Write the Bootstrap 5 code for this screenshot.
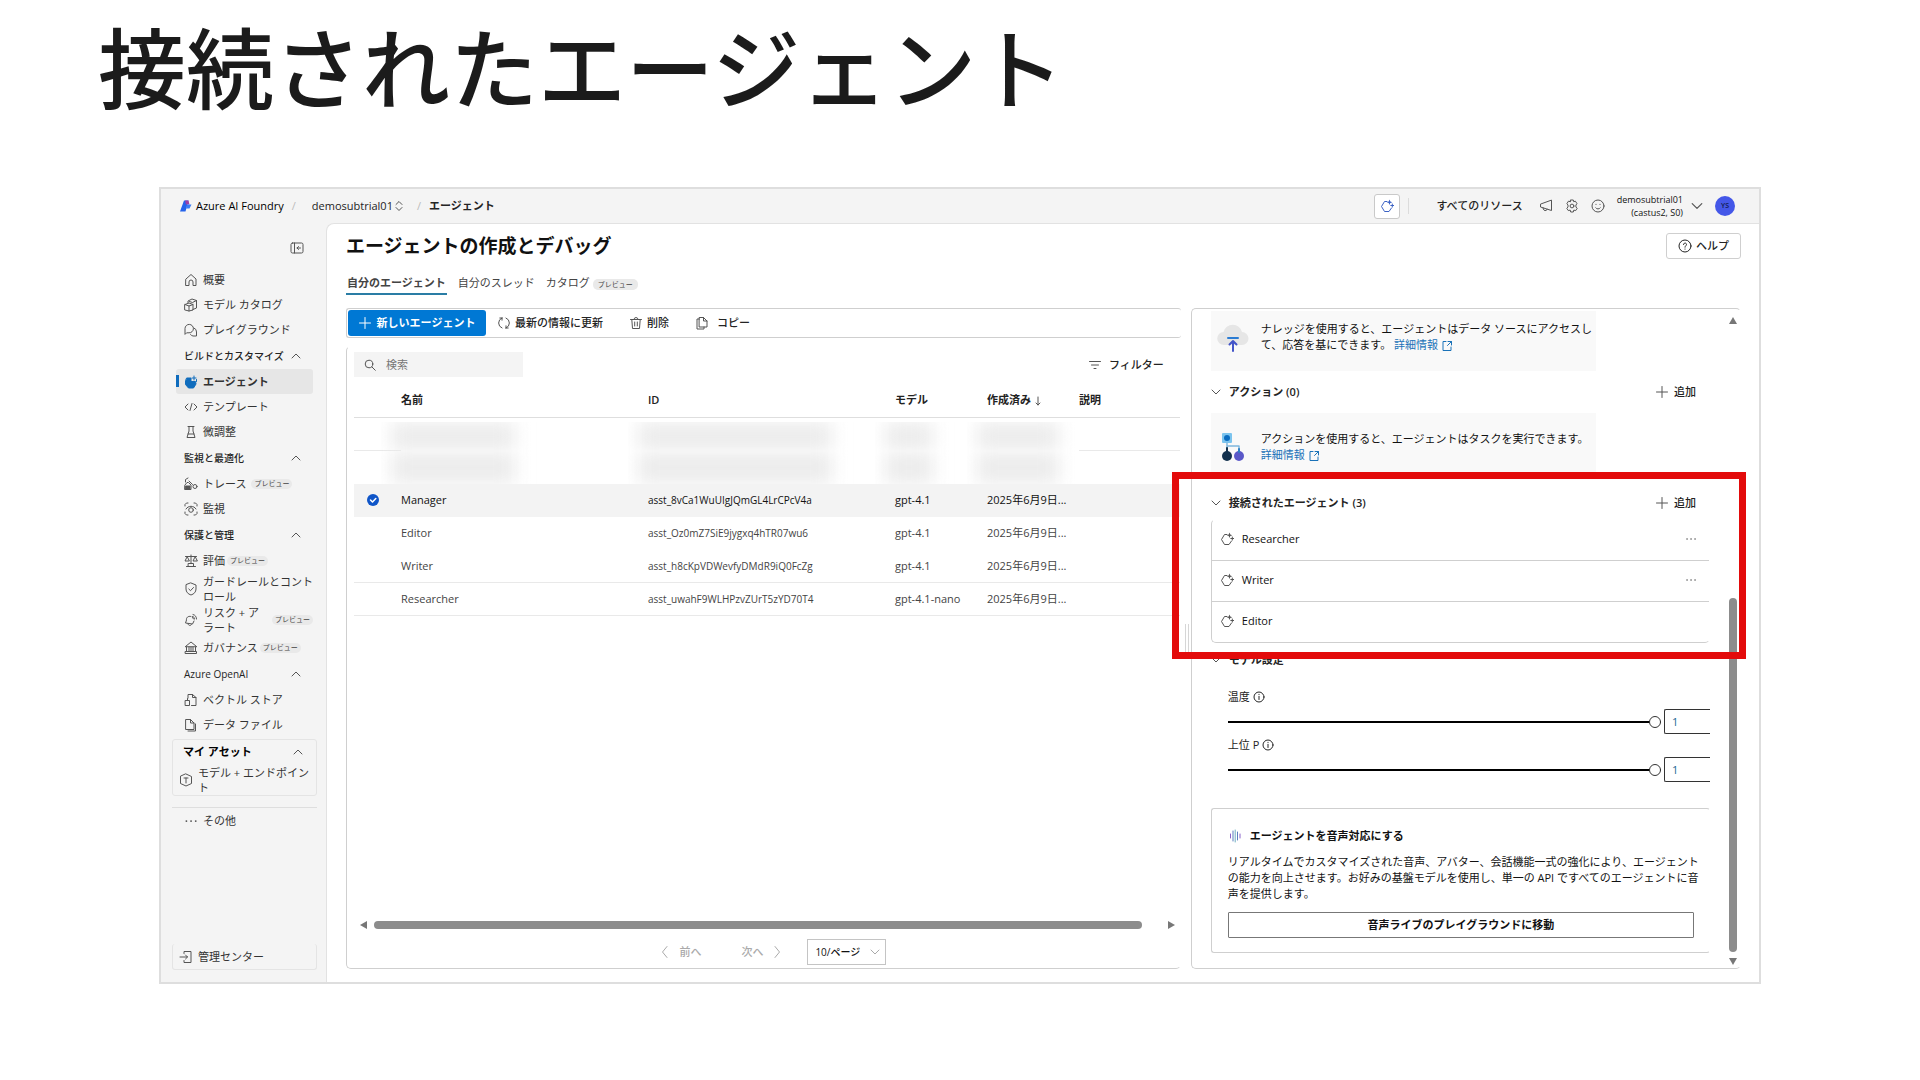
<!DOCTYPE html>
<html lang="ja">
<head>
<meta charset="utf-8">
<meta name="viewport" content="width=device-width, initial-scale=1">
<title>接続されたエージェント</title>
<link href="https://cdn.jsdelivr.net/npm/bootstrap@5.3.0/dist/css/bootstrap.min.css" rel="stylesheet">
<style>
:root{--line:#cfcfcf;--ink:#242424;--blue:#0078d4}
body{font-family:"Open Sans","Noto Sans CJK JP",sans-serif;font-size:11px;line-height:16px;color:var(--ink);background:#fff}
svg{flex:none;fill:none;stroke:currentColor;stroke-width:1;stroke-linecap:round;stroke-linejoin:round}
svg.art{stroke:none}
.side svg,.topbar svg,.sec svg,.secm svg,.agentlist svg,.tools svg,.listbox svg{color:#555}
.tools .primary svg{color:#fff}
button,input,select{font:inherit;color:inherit}
a{color:inherit;text-decoration:none}
.i14{width:14px;height:14px}.i12{width:12px;height:12px}.i10{width:10px;height:10px}
.slide-title{font-family:"Noto Sans CJK JP",sans-serif;font-size:88px;line-height:88px;font-weight:500;color:#1b1b1b;padding:20px 98px 79px}
.stage{padding:0 159px}
.frame{border:2px solid #dedede;background:#f4f4f4}
.topbar{height:34px;padding:0 24px 0 19px}
.slash{color:#bbb}
.copilot{width:26px;height:25px;border:1px solid #c9c9c9;background:#fff;border-radius:3px}
.topbar .copilot svg{color:#3c62c4}
.topbar .divider{width:1px;height:16px;background:#dcdcdc;margin:0 27px 0 8px}
.small-id{font-size:9px;line-height:13px;color:#111}
.avatar{width:20px;height:20px;border-radius:50%;background:#4457e8;color:#111c50;font-size:7px;font-weight:600}
.side{flex:none;width:165px;padding:0 9px 12px 11px;white-space:nowrap}
.toggle-row{height:44px;padding:6px 13px 0 0}
.side a{min-height:25px;padding:0 4px 0 12px;gap:5px;line-height:15px;color:#333}
.side a.two{min-height:31px}
.side a.active{background:#e6e6e6;border-radius:3px;font-weight:600;position:relative;margin:0 4px;padding-left:8px}
.side a.active::before{content:"";position:absolute;left:0;top:6px;width:3px;height:12px;background:#0f6cbd}
.side .active svg{color:#0f6cbd}
.side .grp{height:27px;padding:0 16px 0 12px;font-size:10px;font-weight:500;border:0;background:none;width:100%}
.pill{font-size:7px;line-height:10px;padding:0 3px;margin-left:-3px;border-radius:5px;background:#e9e9e9;white-space:nowrap;color:#444}
.tabs .pill{padding:1px 5px}
.boxed{border:1px solid #e4e4e4;border-radius:3px}
.boxed .grp{height:24px;padding:0 13px 0 10px;font-size:11px;font-weight:700;color:#000}
.boxed a{padding:0 0 0 6px}
.assets{margin-top:2px}
.other{border-top:1px solid #dedede;margin-top:11px}
.main{min-width:0;background:#fff;border:1px solid #e2e2e2;border-width:1px 0 0 1px;border-radius:8px 0 0 0;padding:9px 18px 13px 19px}
.page-h{font-size:19px;line-height:26px;font-weight:700;color:#111}
.help{width:75px;height:26px;border:1px solid #cfcfcf;background:#fff;border-radius:3px;gap:4px;font-weight:500}
.tabs{padding-top:12px;gap:11px;height:37px}
.tabs a{height:24px;line-height:24px;color:#444}
.tabs a.on{font-weight:600;border-bottom:2px solid #2a7da5;padding:0 1px}
.panels{margin-top:12px;gap:10px}
.leftcol{flex:836 1 0;min-width:0;gap:8px}
.rightcol{flex:549 1 0;min-width:0;height:661px;border:1px solid var(--line);border-right-color:transparent;border-radius:5px;position:relative}
.tools{height:30px;border:1px solid var(--line);border-right:0;border-radius:3px;padding:0 1px 1px}
.tools button,.plain{border:0;background:none;padding:0;font-weight:500}
.tools .primary{width:138px;height:26px;background:var(--blue);color:#fff;border-radius:3px;gap:6px;font-weight:700;margin-right:11px}
.tool-gap{margin-right:26px}
.listbox{border:1px solid var(--line);border-top-color:transparent;border-right-color:transparent;border-radius:5px;padding:5px 0 3px 7px}
.search{width:169px;height:25px;background:#f4f4f4;padding-left:10px;gap:10px}
.search input{border:0;background:none;width:120px;padding:0;outline:0}
.search input::placeholder{color:#777}
.agents{table-layout:fixed;width:100%;border-collapse:collapse;color:#444;white-space:nowrap}
.agents th{height:40px;font-weight:600;color:#222;padding:7px 0 0;border-bottom:1px solid #dedede}
.agents td{height:33px;padding:0}
.agents .idt{font-size:10px}
.agents .ln td,.agents .lnc{border-bottom:1px solid #e9e9e9}
.agents .sel{background:#f3f3f3;color:#111}
.c0{width:47px}.c1,.c2{width:247px}.c3{width:92px}.c4{width:92px}
.smudge{height:33px;overflow:hidden;margin-left:-20px;padding:0 10px}
.smudge.u{height:29px;margin-top:4px}
.smudge i{display:block;height:33px;background:#ececec;filter:blur(9px)}
.smudge.u i{height:29px}
.w1 i{width:124px}.w2 i{width:194px}.w3 i{width:48px}.w4 i{width:82px}
.hbar{padding:0 5px 0 0;gap:6px;height:10px}
.listbox .hbar svg,.vbar svg{fill:#777;stroke:none;width:8px;height:8px}
.hthumb{height:8px;background:#8c8c8c;border-radius:4px;flex:1;margin-right:19px}
.hbar svg:first-child{margin-left:6px}
.pager{height:26px;margin-top:9px;padding-left:12px;color:#aaa}
.listbox .pager svg{color:#aaa}
.pagesize{border:1px solid #c4c4c4;border-radius:0;background:#fff;width:79px;height:26px;appearance:none;padding:0 0 0 7px;font-size:10px;font-weight:500;color:#111}
.selwrap svg{position:absolute;right:6px;top:8px}
.scroll{padding:2px 30px 14px 19px}
.hint{background:#f9f9f9;width:385px;max-width:100%;height:60px;padding:0 0 0 6px;gap:12px;color:#111;white-space:nowrap}
.hint a{color:#1a72b8}
.hint.know{padding-bottom:8px}.hint.act{padding-top:8px}
.sec{height:42px;padding-right:14px}
.sec .plain{gap:6px;color:#222}
.conn{position:relative;padding-top:14px}
.conn .sec{height:32px}
.secm{height:34px}
.agentlist{border:1px solid var(--line);border-top-color:transparent;border-right-color:transparent;border-radius:5px}
.agentlist li{height:41px;padding:0 12px 2px 8px;gap:8px;color:#111;border-bottom:1px solid var(--line)}
.agentlist li:last-child{border:0;height:40px}
.callout-box{position:absolute;inset:-1px -36px -16px -39px;border:7px solid #e30b0b;z-index:5;pointer-events:none}
.param{padding-left:17px}
.param .lab{height:20px;gap:3px}
.param .ctl{height:25px;gap:3px;margin:2px 0 1px}
.param input[type=range]{appearance:none;background:none;flex:1;min-width:0;height:16px;margin:0}
.param input[type=range]::-webkit-slider-runnable-track{height:2px;background:#000}
.param .thick::-webkit-slider-runnable-track{height:3px;background:#000}
.param input[type=range]::-webkit-slider-thumb{appearance:none;width:12px;height:12px;border:1px solid #333;border-radius:50%;background:#fff;margin-top:-5px}
.param .num{width:46px;height:25px;border:1px solid #333;border-right:0;border-radius:2px 0 0 2px;background:#fff;padding:0 0 0 7px;color:#1c6790}
.voice{border:1px solid var(--line);border-right-color:transparent;border-radius:3px;margin-top:26px;padding:19px 15px 14px 16px;color:#111}
.voice p{margin:10px 0;white-space:nowrap}
.voice button{width:100%;height:26px;border:1px solid #777;background:#fff;border-radius:1px;font-weight:600}
.vbar{position:absolute;right:1px;top:8px;bottom:3px;width:12px}
.vthumb{width:8px;flex:1;background:#8c8c8c;border-radius:4px;margin:273px 0 5px}
.grip{position:absolute;left:-7px;top:315px;width:4px;height:29px;border:1px solid #d6d6d6;border-width:0 1px}
</style>
<script src="https://cdn.jsdelivr.net/npm/bootstrap@5.3.0/dist/js/bootstrap.bundle.min.js"></script>
</head>
<body>
<svg class="d-none">
<symbol id="up" viewBox="0 0 10 10"><path d="M1 7 5 3l4 4"/></symbol>
<symbol id="down" viewBox="0 0 10 10"><path d="M1 3l4 4 4-4"/></symbol>
<symbol id="plus" viewBox="0 0 12 12"><path d="M6 .5v11M.5 6h11"/></symbol>
<symbol id="bot" viewBox="0 0 14 14"><path d="M7 2.500H4.500L1.500 7.500l3 5h4.500L11.500 9"/><path d="M9.500.5l.8 2 2 .8-2 .8-.8 2-.8-2-2-.8 2-.8z" fill="currentColor" stroke="none"/><path d="M12.300 5v3M10.800 6.500h3"/></symbol>
<symbol id="info" viewBox="0 0 12 12"><circle cx="6" cy="6" r="5"/><path d="M6 5.300v3.200M6 3.300v.2"/></symbol>
<symbol id="ext" viewBox="0 0 12 12"><path d="M5 1.500H2v9h8V7M7 1.500h3.500V5M10.500 1.500 6.500 5.500"/></symbol>
<symbol id="dots" viewBox="0 0 12 12"><path d="M2 6h.1M6 6h.1M10 6h.1" stroke-width="1.500"/></symbol>
</svg>

<h1 class="slide-title m-0">接続されたエージェント</h1>

<div class="stage">
<div class="frame">
  <header class="topbar d-flex align-items-center">
    <svg class="i12 me-1 art" viewBox="0 0 12 12"><path d="M4 .5h4.500L5.500 11.500H0z" fill="#2563eb"/><path d="M5 .5h3.500l1 4H6z" fill="#9b3fa8"/><path d="M7 4.500h4.500L9.500 8.500H6z" fill="#3b7cf5"/></svg>
    <a href="#" class="text-black">Azure AI Foundry</a>
    <span class="slash ms-2 me-3">/</span>
    <a href="#">demosubtrial01</a>
    <svg class="i12" viewBox="0 0 12 12"><path d="M3 4.500 6 1.500l3 3M3 7.500l3 3 3-3"/></svg>
    <span class="slash mx-2 ps-1">/</span>
    <span class="fw-semibold">エージェント</span>
    <button class="copilot d-flex align-items-center justify-content-center ms-auto p-0" aria-label="Copilot"><svg class="i14"><use href="#bot"/></svg></button>
    <div class="divider"></div>
    <a href="#" class="fw-medium me-3">すべてのリソース</a>
    <div class="d-flex gap-2 me-2 pe-1">
      <svg class="i14 me-1" viewBox="0 0 14 14"><path d="M12.500 1.500v10L1.500 8V5.500zM4 8.800c0 3.700 4 3.500 4.200 1.400"/></svg>
      <svg class="i14 me-1" viewBox="0 0 14 14"><circle cx="7" cy="7" r="1.900"/><path d="M5.700 1h2.600l.4 1.700 1.700-.5 1.600 2.500L10.900 6v2l1.300 1.300-1.500 2.300-1.900-.5-.5 1.900H5.700l-.5-1.900-1.900.5-1.500-2.300L3 8V6L1.900 4.700l1.500-2.500 1.800.5z"/></svg>
      <svg class="i14" viewBox="0 0 14 14"><circle cx="7" cy="7" r="6"/><path d="M4.700 8.800c1 1.600 3.600 1.600 4.600 0M5 5.300v.2M9 5.300v.2" /></svg>
    </div>
    <div class="small-id text-end">demosubtrial01<br>(castus2, S0)</div>
    <svg class="i12 mx-2" viewBox="0 0 10 10"><path d="M1 3l4 4 4-4"/></svg>
    <div class="avatar d-flex align-items-center justify-content-center ms-1">YS</div>
  </header>

  <div class="d-flex">
    <nav class="side d-flex flex-column">
      <div class="toggle-row d-flex justify-content-end align-items-center"><button class="plain d-flex p-0" aria-label="メニュー"><svg class="i14" viewBox="0 0 14 14"><rect x="1" y="2" width="12" height="10" rx="1.500"/><path d="M4.500 2v10M10.500 7H7M8.500 5.500 7 7l1.500 1.500"/></svg></button></div>
      <a href="#" class="d-flex align-items-center"><svg class="i14" viewBox="0 0 14 14"><path d="M2 6l5-4.500L12 6v6.500H9V9a2 2 0 0 0-4 0v3.500H2z"/></svg>概要</a>
      <a href="#" class="d-flex align-items-center"><svg class="i14" viewBox="0 0 14 14"><path d="M4 5V3l4-2 4.500 1.500V10L9 11.500M1 6.500 5 5l4 1.500V12l-4 1-4-1zM1 6.500l4 1.500 4-1.500M5 8v5M5.500 3.500l3 1 4-2"/></svg>モデル カタログ</a>
      <a href="#" class="d-flex align-items-center"><svg class="i14" viewBox="0 0 14 14"><path d="M1 11V5.500a4.200 4.200 0 1 1 4 4.300H3zM10 5a4 4 0 0 1 2.500 4v4H9a4 4 0 0 1-2.500-1.500"/></svg>プレイグラウンド</a>
      <button class="grp d-flex align-items-center justify-content-between">ビルドとカスタマイズ<svg class="i10"><use href="#up"/></svg></button>
      <a href="#" class="active d-flex align-items-center"><svg class="i14" viewBox="0 0 14 14"><path d="M3 3h4v3.500h4.500L12 9l-2.500 4h-5L1.500 9.500V6z" fill="currentColor"/><path d="M10 1v4M8 3h4M12.500 4.500v2"/></svg>エージェント</a>
      <a href="#" class="d-flex align-items-center"><svg class="i14" viewBox="0 0 14 14"><path d="M4 4 1 7l3 3M10 4l3 3-3 3M8 3.500l-2 7"/></svg>テンプレート</a>
      <a href="#" class="d-flex align-items-center"><svg class="i14" viewBox="0 0 14 14"><path d="M4 1.500h6M5 1.500V6l-2 6.500h8L9 6V1.500M4 9h6"/></svg>微調整</a>
      <button class="grp d-flex align-items-center justify-content-between">監視と最適化<svg class="i10"><use href="#up"/></svg></button>
      <a href="#" class="d-flex align-items-center"><svg class="i14" viewBox="0 0 14 14"><path d="M1.500 5V2.500L4 1M1 12.500h6V8L4.500 5.500H3L1 8z"/><path d="M2 9h4v3H2z" fill="currentColor"/><circle cx="11" cy="9.500" r="2"/><path d="M5 4l3.500 3.500"/></svg>トレース <span class="pill ms-0">プレビュー</span></a>
      <a href="#" class="d-flex align-items-center"><svg class="i14" viewBox="0 0 14 14"><path d="M1 4V2.500L2.500 1H4M10 1h1.500L13 2.500V4M13 10v1.500L11.500 13H10M4 13H2.500L1 11.500V10M2 7c2-3.700 8-3.700 10 0"/><circle cx="7" cy="8" r="2.300"/></svg>監視</a>
      <button class="grp d-flex align-items-center justify-content-between">保護と管理<svg class="i10"><use href="#up"/></svg></button>
      <a href="#" class="d-flex align-items-center"><svg class="i14" viewBox="0 0 14 14"><path d="M7 1v8M1.500 2.500h11M3 3 1 7h4zM11 3 9 7h4zM4.500 9.500h5v3h-5zM2.500 12.500h9"/></svg>評価 <span class="pill">プレビュー</span></a>
      <a href="#" class="two d-flex align-items-center"><svg class="i14" viewBox="0 0 14 14"><path d="M7 1l5 2v4c0 3-2 5-5 6-3-1-5-3-5-6V3zM4.800 7l1.700 1.700L9.500 5.500"/></svg><span>ガードレールとコント<br>ロール</span></a>
      <a href="#" class="two d-flex align-items-center"><svg class="i14" viewBox="0 0 14 14"><path d="M7 3.500C4 2.500 2 5 2.500 7L1.500 10l7 1 1.500-3M4 11c.5 2 3 2 3.500.5M8.500 4.500l1 1.500M9 1.500C11.500 2 12.500 4 12.500 6M8.500 3.500c1.300.2 2 1 2 2.500"/></svg><span>リスク + ア<br>ラート</span><span class="pill ms-auto">プレビュー</span></a>
      <a href="#" class="d-flex align-items-center"><svg class="i14" viewBox="0 0 14 14"><path d="M1.500 5.500 7 1l5.500 4.500zM2.500 6v4.500M5 6v4.500M7 6v4.500M9 6v4.500M11.500 6v4.500M1.500 10.500h11v2h-11z"/></svg>ガバナンス <span class="pill">プレビュー</span></a>
      <button class="grp d-flex align-items-center justify-content-between">Azure OpenAI<svg class="i10"><use href="#up"/></svg></button>
      <a href="#" class="d-flex align-items-center"><svg class="i14" viewBox="0 0 14 14"><path d="M4 5V1.500h4.500L12 4.500v8H7.500M8.500 1.500v3H12M1.500 7.500h4v5h-4zM3.500 5.500v2"/></svg>ベクトル ストア</a>
      <a href="#" class="d-flex align-items-center"><svg class="i14" viewBox="0 0 14 14"><path d="M2 1.500h4.500L10 5v6.500H2zM6.500 1.500V5H10M11.500 6v7H4"/></svg>データ ファイル</a>
      <div class="boxed assets">
        <button class="grp d-flex align-items-center justify-content-between">マイ アセット<svg class="i10"><use href="#up"/></svg></button>
        <a href="#" class="two d-flex align-items-center"><svg class="i14" viewBox="0 0 14 14"><path d="M7 1l5.500 2.500v7L7 13l-5.500-2.500v-7zM5 5h4M7 5v5"/></svg><span>モデル + エンドポイン<br>ト</span></a>
      </div>
      <div class="other"><a href="#" class="d-flex align-items-center"><svg class="i14"><use href="#dots"/></svg>その他</a></div>
      <div class="boxed mt-auto border-top-0"><a href="#" class="d-flex align-items-center"><svg class="i14" viewBox="0 0 14 14"><path d="M5 3.500v-2h7v11H5v-2M1 7h7.500M6.500 5l2 2-2 2"/></svg>管理センター</a></div>
    </nav>

    <main class="main flex-grow-1">
      <div class="d-flex justify-content-between">
        <h2 class="page-h m-0">エージェントの作成とデバッグ</h2>
        <button class="help d-flex align-items-center justify-content-center"><svg class="i14" viewBox="0 0 14 14"><circle cx="7" cy="7" r="6"/><path d="M5.500 5.500c0-2 3-2 3 0C8.500 6.700 7 6.700 7 8.200M7 10v.2"/></svg>ヘルプ</button>
      </div>
      <div class="tabs d-flex">
        <a href="#" class="on">自分のエージェント</a><a href="#">自分のスレッド</a><a href="#">カタログ <span class="pill ms-0">プレビュー</span></a>
      </div>

      <div class="panels d-flex">
        <section class="leftcol d-flex flex-column">
          <div class="tools d-flex align-items-center">
            <button class="primary d-flex align-items-center justify-content-center"><svg class="i12"><use href="#plus"/></svg>新しいエージェント</button>
            <button class="d-flex align-items-center gap-1 tool-gap"><svg class="i14" viewBox="0 0 14 14"><path d="M5 2a5.400 5.400 0 0 0 0 10M5 2H2.800M5 2v2.200M9 12a5.400 5.400 0 0 0 0-10M9 12h2.200M9 12V9.800"/></svg>最新の情報に更新</button>
            <button class="d-flex align-items-center gap-1 tool-gap"><svg class="i14" viewBox="0 0 14 14"><path d="M1.500 3.500h11M5 3.500a2 2 0 0 1 4 0M2.800 3.500l.7 9h7l.7-9M5.700 6v4M8.300 6v4"/></svg>削除</button>
            <button class="d-flex align-items-center gap-2"><svg class="i14" viewBox="0 0 14 14"><path d="M4.500 1.500h4L12 5v6H4.500zM8.500 1.500V5H12M4.500 3H2v10h7v-2"/></svg>コピー</button>
          </div>
          <div class="listbox d-flex flex-column flex-grow-1">
            <div class="d-flex justify-content-between align-items-center">
              <label class="search d-flex align-items-center"><svg class="i12" viewBox="0 0 12 12"><circle cx="5" cy="5" r="3.800"/><path d="M8 8l3.300 3.300"/></svg><input type="text" placeholder="検索" aria-label="検索"></label>
              <button class="plain d-flex align-items-center gap-2 me-3"><svg class="i12" viewBox="0 0 12 12"><path d="M.5 2.500h11M2.500 6h7M5 9.500h2"/></svg>フィルター</button>
            </div>
            <table class="agents">
              <colgroup><col class="c0"><col class="c1"><col class="c2"><col class="c3"><col class="c4"><col></colgroup>
              <thead><tr><th></th><th>名前</th><th>ID</th><th>モデル</th><th>作成済み <svg width="8" height="10" viewBox="0 0 8 10"><path d="M4 1v8M2 7l2 2 2-2"/></svg></th><th>説明</th></tr></thead>
              <tbody>
                <tr><td class="lnc"></td><td><div class="smudge u w1"><i></i></div></td><td><div class="smudge u w2"><i></i></div></td><td><div class="smudge u w3"><i></i></div></td><td><div class="smudge u w4"><i></i></div></td><td class="lnc"></td></tr>
                <tr><td></td><td><div class="smudge w1"><i></i></div></td><td><div class="smudge w2"><i></i></div></td><td><div class="smudge w3"><i></i></div></td><td><div class="smudge w4"><i></i></div></td><td></td></tr>
                <tr class="sel"><td><svg class="i12 ms-2 d-block art" viewBox="-5 0 12 12" overflow="visible"><circle cx="6" cy="6" r="6" fill="#0f55c8"/><path d="M3.500 6l2 2 3.300-3.500" stroke="#fff" stroke-width="1.500"/></svg></td><td>Manager</td><td class="idt">asst_8vCa1WuUIgJQmGL4LrCPcV4a</td><td>gpt-4.1</td><td>2025年6月9日...</td><td></td></tr>
                <tr><td></td><td>Editor</td><td class="idt">asst_Oz0mZ7SiE9jygxq4hTR07wu6</td><td>gpt-4.1</td><td>2025年6月9日...</td><td></td></tr>
                <tr class="ln"><td></td><td>Writer</td><td class="idt">asst_h8cKpVDWevfyDMdR9iQ0FcZg</td><td>gpt-4.1</td><td>2025年6月9日...</td><td></td></tr>
                <tr class="ln"><td></td><td>Researcher</td><td class="idt">asst_uwahF9WLHPzvZUrT5zYD70T4</td><td>gpt-4.1-nano</td><td>2025年6月9日...</td><td></td></tr>
              </tbody>
            </table>
            <div class="hbar d-flex align-items-center mt-auto"><svg viewBox="0 0 8 8"><path d="M7 0v8L0 4z"/></svg><div class="hthumb"></div><svg viewBox="0 0 8 8"><path d="M1 0v8l7-4z"/></svg></div>
            <div class="pager d-flex align-items-center justify-content-center">
              <button class="plain d-flex align-items-center gap-2 me-4"><svg class="i12" viewBox="0 0 12 12"><path d="M8 .5 3.500 6 8 11.500"/></svg>前へ</button>
              <button class="plain d-flex align-items-center gap-2 mx-3"><span>次へ</span><svg class="i12" viewBox="0 0 12 12"><path d="M4 .5 8.500 6 4 11.500"/></svg></button>
              <div class="selwrap position-relative ms-2"><select class="pagesize" aria-label="ページあたりの件数"><option>10/ページ</option></select><svg class="i10"><use href="#down"/></svg></div>
            </div>
          </div>
        </section>

        <section class="rightcol">
          <div class="scroll">
            <div class="hint know d-flex align-items-center">
              <svg class="art" width="32" height="32" viewBox="0 0 32 32"><path d="M7 24a6.500 6.500 0 0 1-.5-13A9.500 9.500 0 0 1 25 11a6.500 6.500 0 0 1 0 13z" fill="#e6e6e6"/><path d="M11 17h10" stroke="#2b7cd3" stroke-width="2"/><path d="M16 30V20M12.500 23.500 16 20l3.500 3.500" stroke="#4355c9" stroke-width="2"/></svg>
              <div>ナレッジを使用すると、エージェントはデータ ソースにアクセスし<br>て、応答を基にできます。 <a href="#">詳細情報 <svg class="i12"><use href="#ext"/></svg></a></div>
            </div>
            <div class="sec d-flex align-items-center"><svg class="i10 me-2"><use href="#down"/></svg><span class="fw-semibold flex-grow-1">アクション (0)</span><button class="plain d-flex align-items-center"><svg class="i12"><use href="#plus"/></svg>追加</button></div>
            <div class="hint act d-flex align-items-center">
              <svg class="art" width="32" height="32" viewBox="0 0 32 32"><rect x="5" y="2" width="10" height="10" rx="1" fill="#7cc4ee"/><circle cx="10" cy="7" r="3" fill="#0a6cc0"/><path d="M10 12v8M10 15h12v5" stroke="#7fb7dd" stroke-width="1.500"/><circle cx="10" cy="25" r="5" fill="#12304d"/><circle cx="22" cy="25" r="5" fill="#5a58c8"/><path d="M10 17v4" stroke="#12304d" stroke-width="2"/><path d="M22 18v3" stroke="#2f7fc4" stroke-width="2"/></svg>
              <div>アクションを使用すると、エージェントはタスクを実行できます。<br><a href="#">詳細情報 <svg class="i12"><use href="#ext"/></svg></a></div>
            </div>
            <div class="conn">
              <div class="sec d-flex align-items-center"><svg class="i10 me-2"><use href="#down"/></svg><span class="fw-semibold flex-grow-1">接続されたエージェント (3)</span><button class="plain d-flex align-items-center"><svg class="i12"><use href="#plus"/></svg>追加</button></div>
              <ul class="agentlist list-unstyled m-0">
                <li class="d-flex align-items-center"><svg class="i14"><use href="#bot"/></svg><span class="flex-grow-1">Researcher</span><button class="plain d-flex" aria-label="その他"><svg class="i12"><use href="#dots"/></svg></button></li>
                <li class="d-flex align-items-center"><svg class="i14"><use href="#bot"/></svg><span class="flex-grow-1">Writer</span><button class="plain d-flex" aria-label="その他"><svg class="i12"><use href="#dots"/></svg></button></li>
                <li class="d-flex align-items-center"><svg class="i14"><use href="#bot"/></svg><span class="flex-grow-1">Editor</span></li>
              </ul>
              <div class="callout-box"></div>
            </div>
            <div class="secm d-flex align-items-center"><svg class="i10 me-2"><use href="#down"/></svg><span class="fw-semibold">モデル設定</span></div>
            <div class="param pt-2">
              <div class="lab d-flex align-items-center pt-1"><label for="temp">温度</label><svg class="i12"><use href="#info"/></svg></div>
              <div class="ctl d-flex align-items-center mt-1"><input type="range" id="temp" min="0" max="1" step="0.1" value="1"><input class="num" type="text" value="1" aria-label="温度の値"></div>
              <div class="lab d-flex align-items-center"><label for="topp">上位 P</label><svg class="i12"><use href="#info"/></svg></div>
              <div class="ctl d-flex align-items-center"><input class="thick" type="range" id="topp" min="0" max="1" step="0.1" value="1"><input class="num" type="text" value="1" aria-label="上位 P の値"></div>
            </div>
            <div class="voice">
              <div class="d-flex align-items-center gap-2 fw-bold"><svg class="i14" viewBox="0 0 14 14" stroke-width="1.500"><path d="M2.500 5v4M12 5v4" stroke="#8a63c9"/><path d="M5 2v10M9.500 3v8" stroke="#5a7fc0"/><path d="M7.200 1v12" stroke="#6fb0c0"/></svg>エージェントを音声対応にする</div>
              <p>リアルタイムでカスタマイズされた音声、アバター、会話機能一式の強化により、エージェント<br>の能力を向上させます。お好みの基盤モデルを使用し、単一の API ですべてのエージェントに音<br>声を提供します。</p>
              <button>音声ライブのプレイグラウンドに移動</button>
            </div>
          </div>
          <div class="vbar d-flex flex-column align-items-center"><svg viewBox="0 0 8 8"><path d="M0 7h8L4 0z"/></svg><div class="vthumb"></div><svg viewBox="0 0 8 8"><path d="M0 1h8L4 8z"/></svg></div>
          <div class="grip"></div>
        </section>
      </div>
    </main>
  </div>
</div>
</div>
</body>
</html>
